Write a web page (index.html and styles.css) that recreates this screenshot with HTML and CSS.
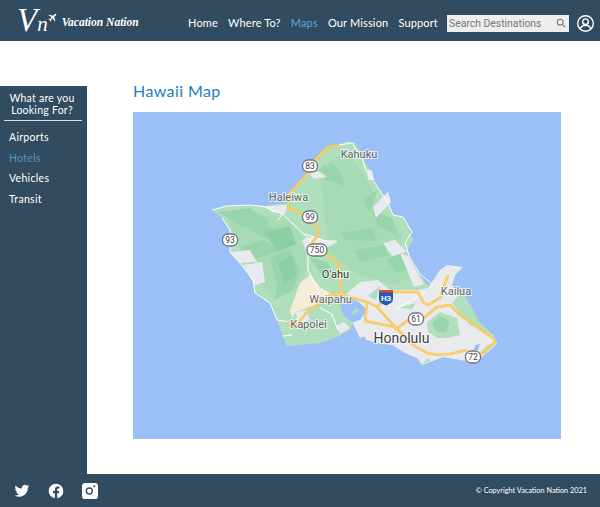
FILE: index.html
```html
<!DOCTYPE html>
<html lang="en">

<head>
    <meta charset="UTF-8">
    <meta name="viewport" content="width=device-width, initial-scale=1.0">
    <title>Vacation Nation - Maps</title>
    <link rel="stylesheet" href="styles.css">
</head>

<body>
    <header class="header">
        <a class="logo" href="#">
            <span class="logo-mark">V</span><span class="logo-n">n</span>
            <svg class="logo-plane" viewBox="0 0 24 24"><path d="M22 2.500c-1-1-2.700-.5-3.800.6l-3.700 3.700L5 4 3.500 5.500l7.700 4.800-3.900 3.900-3-.5L3 15l4 2 2 4 1.300-1.300-.5-3 3.900-3.900 4.800 7.700L20 19l-2.800-9.500 3.700-3.700C22 4.700 23 3.500 22 2.500z"/></svg>
            <span class="logo-text">Vacation Nation</span>
        </a>
        <nav class="nav">
            <a href="#">Home</a>
            <a href="#">Where To?</a>
            <a href="#" class="active">Maps</a>
            <a href="#">Our Mission</a>
            <a href="#">Support</a>
        </nav>
        <div class="search">
            <span class="search-text">Search Destinations</span>
            <svg class="search-icon" viewBox="0 0 24 24"><circle cx="10" cy="10" r="7"/><path d="M15 15l7 7"/></svg>
        </div>
        <svg class="user-icon" viewBox="0 0 24 24">
            <circle cx="12" cy="12" r="11"/>
            <circle cx="12" cy="9.500" r="4"/>
            <path d="M4.500 19.500c1.500-3.500 4-5 7.500-5s6 1.500 7.500 5"/>
        </svg>
    </header>

    <div class="main">
        <aside class="sidebar">
            <h2 class="sidebar-title">What are you<br>Looking For?</h2>
            <ul class="sidebar-list">
                <li><a href="#">Airports</a></li>
                <li><a href="#" class="active">Hotels</a></li>
                <li><a href="#">Vehicles</a></li>
                <li><a href="#">Transit</a></li>
            </ul>
        </aside>

        <section class="content">
            <h1 class="page-title">Hawaii Map</h1>
            <svg class="map" viewBox="133 112 428 327">
                <defs>
                    <g id="roads">
                        <path d="M339 146L329 147 322 153 315 160 307 175 298 184 288 195 288 205 290 209 303 214 310 217 315 223 319 233 312 243"/>
                        <path d="M317 250L327 255 340 265 340 287 343 295 333 293 317 305 307 312 298 323 292 327 287 322"/>
                        <path d="M343 295L353 298 367 302 377 307 395 327 413 345 427 353 438 355 450 354 467 350"/>
                        <path d="M377 307L386 298 393 292 418 292 423 302 428 305 440 298 448 275"/>
                        <path d="M367 303L365 321 385 325 395 327M395 330L408 320 416 319 425 317 437 307 450 305 460 315 470 322 477 327 493 338 495 342 488 348 480 355"/>
                    </g>
                </defs>
                <rect class="sea" x="133" y="112" width="428" height="327"/>

                <!-- island -->
                <path class="land" d="M212 210L227 206 252 205 265 206 287 203 288 195 298 183 307 173 315 158 322 151 329 145 339 144 347 141 355 143 360 150 365 162 370 170 373 180 381 192 388 203 393 215 403 217 408 224 413 240 408 248 408 255 417 270 427 285 434 284 440 270 447 265 463 267 455 275 452 285 463 292 470 305 478 320 493 335 497 343 488 352 480 358 472 362 443 357 430 362 422 365 417 358 403 352 393 345 377 343 360 338 353 323 350 330 337 337 320 343 287 346 283 337 277 320 270 303 255 293 253 280 240 263 230 252 230 230 222 218z"/>

                <!-- forest -->
                <path class="forest-light" d="M226 214L285 216 303 238 306 270 296 290 274 300 260 282 244 258 234 236z"/>
                <path class="forest-light" d="M320 170L345 150 362 172 385 215 402 232 400 262 412 275 395 285 360 275 340 262 328 250 325 215z"/>
                <path class="forest" d="M218 212L250 208 270 222 262 232 240 226z"/>
                <path class="forest" d="M240 247L263 240 280 250 253 260z"/>
                <path class="forest" d="M242 222L270 226 282 240 262 238z"/>
                <path class="forest" d="M270 257L290 250 300 270 292 290 275 300 277 283z"/>
                <path class="forest-dark" d="M264 232L290 226 296 244 278 252z"/>
                <path class="forest-dark" d="M278 262L292 256 296 274 284 284z"/>
                <path class="forest" d="M325 180L330 160 340 172 345 186z"/>
                <path class="forest" d="M325 165L336 172 330 176 318 170z"/>
                <path class="forest" d="M340 233L372 228 378 241 345 240z"/>
                <path class="forest" d="M355 250L385 245 387 256 360 262z"/>
                <path class="forest" d="M363 200L377 190 370 213z"/>
                <path class="forest" d="M372 212L392 218 398 236 378 226z"/>
                <path class="forest" d="M386 260L404 252 412 270 396 272z"/>
                <path class="forest" d="M310 258L328 262 334 280 322 276z"/>

                <!-- towns -->
                <path class="town" d="M265 206L287 205 285 214 272 212z"/>
                <path class="town" d="M308 172L320 172 326 177 314 179z"/>
                <path class="town" d="M302 240L312 236 324 240 338 242 326 248 308 256z"/>
                <path class="town" d="M367 170L372 170 374 180 368 180z"/>
                <path class="town" d="M373 207L388 192 391 202 376 218z"/>
                <path class="town" d="M383 243L395 240 407 252 392 256z"/>
                <path class="town" d="M230 252L250 250 257 262 240 263z"/>
                <path class="town" d="M243 265L262 262 265 282 255 285z"/>
                <path class="town" d="M345 295L360 282 378 280 390 290 418 290 428 288 440 270 447 265 463 267 455 275 452 285 458 296 452 303 470 325 493 335 497 343 488 352 480 358 472 362 443 357 430 362 422 365 417 358 403 352 393 345 377 343 360 338 353 323 367 312z"/>
                <path class="town" d="M400 253L408 256 417 272 424 284 414 287z"/>
                <path class="town" d="M296 312L306 310 310 320 298 324z"/>

                <!-- green over the east side -->
                <path class="land" d="M427 322L440 312 457 318 460 335 447 338 437 338 428 332z"/>
                <path class="forest" d="M432 322L442 316 450 322 446 332 436 332z"/>
                <path class="land" d="M458 300L468 304 478 322 488 332 474 326 462 314z"/>
                <path class="land" d="M480 353L488 345 492 346 485 354z"/>
                <path class="land" d="M422 364L428 358 431 361z"/>
                <path class="land" d="M398 308L416 303 412 309z"/>
                <path class="land" d="M368 296L380 286 376 300z"/>
                <path class="sea" d="M475 345L480 344 478 350 474 350z"/>
                <path class="tan" d="M290 310L300 283 310 275 320 287 333 295 320 303 307 308 296 312 292 318z"/>

                <!-- harbor -->
                <path class="sea" d="M340 305L352 298 360 303 367 310 360 320 352 322 343 315z"/>
                <path class="land" d="M352 312L358 308 359 311 353 315z"/>
                <path class="town" d="M336 326L344 322 350 328 340 334z"/>
                <path class="sea" d="M361 337L366 337 365 340 361 340z"/>

                <!-- minor roads -->
                <path class="minor" d="M212 210L227 206 252 205 265 207 282 214 305 235 312 243M283 213L278 220M222 218L230 230 230 252 240 263 253 280 255 293 270 303 277 320 290 322M283 336L292 335M305 234L325 241 337 241M308 256L308 270 318 290 322 303M339 145L352 143 362 158 366 170 373 180 388 203 393 215 403 217 412 232 405 243 410 258 420 274 432 284M395 310L412 300 426 292M320 308L332 314 338 330"/>

                <!-- highways -->
                <use class="road-outer" href="#roads"/>
                <use class="road-inner" href="#roads"/>

                <!-- labels -->
                <text class="label" x="359" y="158" text-anchor="middle">Kahuku</text>
                <text class="label" x="288.500" y="201" text-anchor="middle">Haleiwa</text>
                <text class="label dark" x="335.500" y="278" text-anchor="middle">O'ahu</text>
                <text class="label" x="330.500" y="303" text-anchor="middle">Waipahu</text>
                <text class="label" x="308.500" y="328" text-anchor="middle">Kapolei</text>
                <text class="label" x="456" y="295" text-anchor="middle">Kailua</text>
                <text class="label city" x="401.500" y="343" text-anchor="middle">Honolulu</text>

                <!-- shields -->
                <rect class="shield" x="302.500" y="160" width="15" height="12" rx="5.500"/>
                <text class="shield-num" x="310" y="169" text-anchor="middle">83</text>
                <rect class="shield" x="302.500" y="211" width="15" height="12" rx="5.500"/>
                <text class="shield-num" x="310" y="220" text-anchor="middle">99</text>
                <rect class="shield" x="222.500" y="234" width="15" height="12" rx="5.500"/>
                <text class="shield-num" x="230" y="243" text-anchor="middle">93</text>
                <rect class="shield" x="307" y="244" width="20" height="12" rx="5.500"/>
                <text class="shield-num" x="317" y="253" text-anchor="middle">750</text>
                <rect class="shield" x="408.500" y="313" width="15" height="12" rx="5.500"/>
                <text class="shield-num" x="416" y="322" text-anchor="middle">61</text>
                <rect class="shield" x="465.500" y="351" width="15" height="12" rx="5.500"/>
                <text class="shield-num" x="473" y="360" text-anchor="middle">72</text>

                <path class="h3-blue" d="M379 292H393V299C393 303 389 304 386 305.500 383 304 379 303 379 299z"/>
                <rect class="h3-red" x="379" y="290" width="14" height="2.500"/>
                <text class="h3-text" x="386" y="301" text-anchor="middle">H3</text>
            </svg>
        </section>
    </div>

    <footer class="footer">
        <div class="social">
            <svg class="social-icon" viewBox="0 0 24 24"><path d="M23 4.900c-.8.4-1.700.6-2.600.7.900-.6 1.700-1.400 2-2.500-.9.500-1.900.9-2.900 1.100a4.500 4.500 0 0 0-7.700 4.100C8 8.100 4.700 6.300 2.500 3.600a4.500 4.500 0 0 0 1.400 6c-.7 0-1.400-.2-2-.6 0 2.200 1.500 4.100 3.600 4.500-.7.200-1.400.2-2 .1.600 1.800 2.300 3.100 4.200 3.100A9 9 0 0 1 1 18.600 12.800 12.800 0 0 0 20.700 7.200c.9-.6 1.700-1.400 2.300-2.300z"/></svg>
            <svg class="social-icon" viewBox="0 0 24 24"><path d="M23 12a11 11 0 1 0-12.700 10.900v-7.700H7.500V12h2.800V9.600c0-2.800 1.600-4.300 4.200-4.300 1.200 0 2.500.2 2.500.2v2.700h-1.400c-1.400 0-1.800.9-1.800 1.700V12h3l-.5 3.200h-2.500v7.700A11 11 0 0 0 23 12z"/></svg>
            <svg class="social-icon" viewBox="0 0 24 24"><path fill-rule="evenodd" d="M5 0h14a5 5 0 0 1 5 5v14a5 5 0 0 1-5 5H5a5 5 0 0 1-5-5V5a5 5 0 0 1 5-5zm6 6.500a5.500 5.500 0 1 0 0 11 5.500 5.500 0 0 0 0-11zm0 2a3.500 3.500 0 1 1 0 7 3.500 3.500 0 0 1 0-7zm7.500-5a1.500 1.500 0 1 0 0 3 1.500 1.500 0 0 0 0-3z"/></svg>
        </div>
        <p class="copyright">© Copyright Vacation Nation 2021</p>
    </footer>
</body>

</html>
```

FILE: styles.css
```css
* {
    padding: 0;
    margin: 0;
    box-sizing: border-box;
}

body {
    display: flex;
    flex-direction: column;
    height: 507px;
    font-family: 'Lato', sans-serif;
    background: white;
    overflow: hidden;
}

a {
    color: inherit;
    text-decoration: none;
}

.header {
    display: flex;
    align-items: center;
    height: 41px;
    flex-shrink: 0;
    background: #314b61;
    color: #fff;
}

.logo {
    display: flex;
    align-items: center;
    width: 188px;
    padding-left: 17px;
    flex-shrink: 0;
    white-space: nowrap;
}

.logo-mark {
    font-family: 'Liberation Serif', serif;
    font-style: italic;
    font-size: 33px;
    line-height: 1;
}

.logo-n {
    margin: 8px 0 0 0;
    font-family: 'Liberation Serif', serif;
    font-style: italic;
    font-size: 21px;
}

.logo-plane {
    width: 10px;
    height: 10px;
    margin: -6px 0 0 -1px;
    fill: #fff;
}

.logo-text {
    margin: 3px 0 0 5px;
    font-family: 'Liberation Serif', serif;
    font-style: italic;
    font-weight: bold;
    font-size: 11.500px;
}

.nav {
    display: flex;
    width: 259px;
    flex-shrink: 0;
    justify-content: space-between;
    padding: 3px 9px 0 0;
    font-size: 11px;
    letter-spacing: 0.15px;
    white-space: nowrap;
}

.nav .active {
    color: #5aa9dc;
}

.search {
    display: flex;
    align-items: center;
    justify-content: space-between;
    width: 122px;
    height: 17px;
    padding: 0 3px 0 2px;
    margin-top: 5px;
    background: #eee;
    flex-shrink: 0;
}

.search-text {
    font-family: 'Roboto', sans-serif;
    font-size: 10.400px;
    color: #777;
    white-space: nowrap;
}

.search-icon {
    width: 10px;
    height: 10px;
    fill: none;
    stroke: #777;
    stroke-width: 2.500;
}

.user-icon {
    width: 17px;
    height: 17px;
    margin: 5px 0 0 8px;
    fill: none;
    stroke: #fff;
    stroke-width: 2;
    flex-shrink: 0;
}

.main {
    display: flex;
    flex: 1;
    padding-top: 45px;
}

.sidebar {
    width: 87px;
    flex-shrink: 0;
    background: #314b61;
    color: #fff;
}

.sidebar-title {
    margin: 0 5px 0 4px;
    padding: 6px 2px 4px 0;
    border-bottom: 1px solid #ddd;
    font-size: 10.500px;
    font-weight: normal;
    line-height: 12px;
    text-align: center;
    letter-spacing: 0.25px;
}

.sidebar-list {
    list-style: none;
    margin-top: 6px;
    padding-left: 9px;
    font-size: 10.500px;
    letter-spacing: 0.3px;
}

.sidebar-list li {
    height: 20.600px;
    line-height: 20px;
}

.sidebar-list .active {
    color: #5a94bd;
}

.content {
    flex: 1;
    padding-left: 46px;
}

.page-title {
    height: 26px;
    font-size: 16px;
    font-weight: normal;
    line-height: 10px;
    color: #1c7fbd;
    letter-spacing: 0.4px;
}

.map {
    display: block;
    width: 428px;
    height: 327px;
}

.sea {
    fill: #9bbff7;
}

.land {
    fill: #b0dfbd;
}

.forest-light {
    fill: #a6dbb5;
}

.forest {
    fill: #98d5ad;
}

.forest-dark {
    fill: #8bd0a3;
}

.town {
    fill: #e8eaed;
}

.tan {
    fill: #f5ecd7;
}

.minor {
    fill: none;
    stroke: #fff;
    stroke-width: 1;
}

.road-outer {
    fill: none;
    stroke: #f9bf4a;
    stroke-width: 2.500;
    stroke-linejoin: round;
}

.road-inner {
    fill: none;
    stroke: #fde293;
    stroke-width: 0.800;
    stroke-linejoin: round;
}

.label {
    font-family: 'Roboto', sans-serif;
    font-size: 11px;
    fill: #5f6368;
    stroke: #fff;
    stroke-width: 2px;
    stroke-opacity: 0.7;
    paint-order: stroke;
}

.label.dark {
    fill: #2f3336;
}

.label.city {
    font-size: 14px;
    fill: #3c4043;
}

.shield {
    fill: #fff;
    stroke: #70757a;
    stroke-width: 1.300;
}

.shield-num {
    font-family: 'Roboto', sans-serif;
    font-size: 8.500px;
    fill: #3c4043;
}

.h3-blue {
    fill: #1a5fb4;
}

.h3-red {
    fill: #d9453a;
}

.h3-text {
    font-family: 'Roboto', sans-serif;
    font-size: 8px;
    font-weight: bold;
    fill: #fff;
}

.footer {
    display: flex;
    align-items: center;
    justify-content: space-between;
    height: 33px;
    flex-shrink: 0;
    padding: 0 13px 0 14px;
    background: #314b61;
    color: #fff;
}

.social {
    display: flex;
    gap: 18px;
}

.social-icon {
    width: 16px;
    height: 16px;
    fill: #fff;
}

.copyright {
    font-size: 7.300px;
}
```
